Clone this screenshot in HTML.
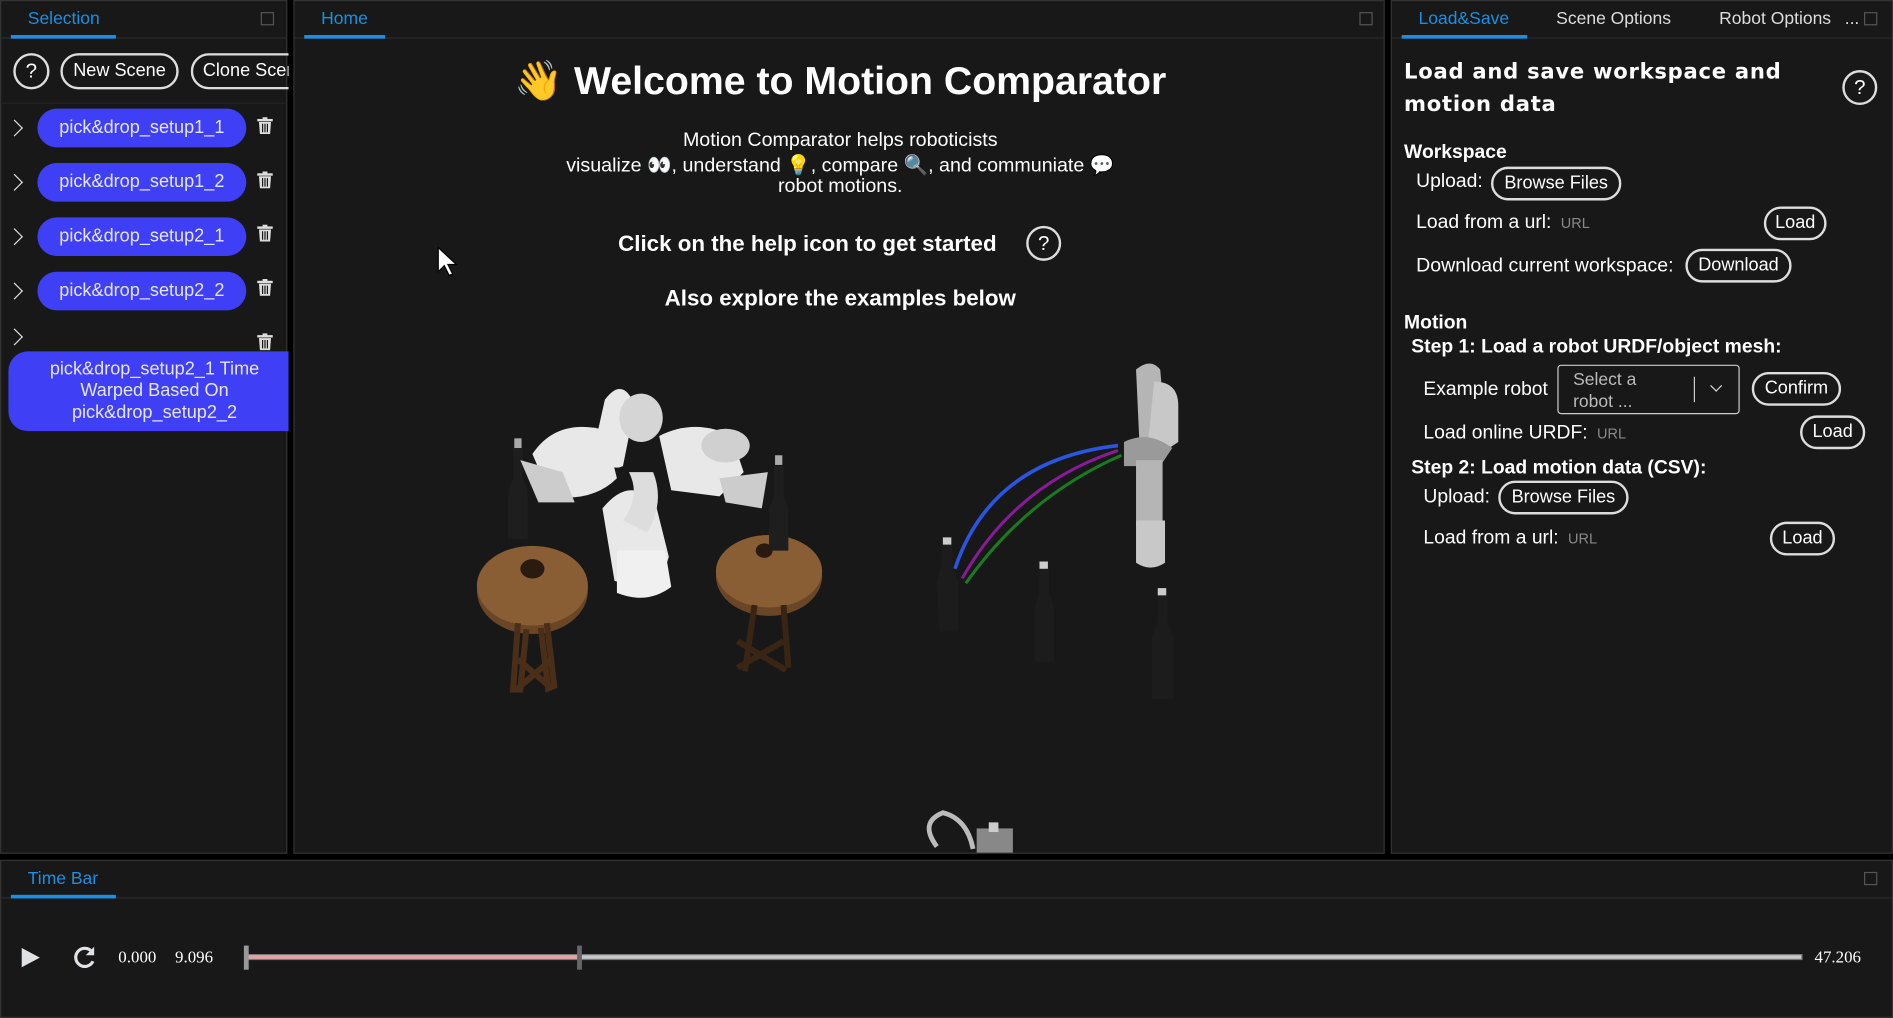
<!DOCTYPE html>
<html><head><meta charset="utf-8">
<style>
*{box-sizing:border-box;margin:0;padding:0}
html,body{width:1893px;height:1018px;overflow:hidden;background:#000}
#root{position:absolute;left:0;top:0;width:1568px;height:843px;transform:scale(1.20727,1.20760);transform-origin:0 0;background:#000;font-family:"Liberation Sans",Arial,sans-serif;color:#fff}
.panel{position:absolute;background:#181818;border:1px solid #333}
.tabbar{position:absolute;left:0;right:0;top:0;height:31px;border-bottom:1px solid #2c2c2c}
.tab{position:absolute;top:7px;font-size:14.5px;color:#ddd}
.tab.act{color:#1a8fe3}
.uline{position:absolute;top:28px;height:3px;background:#1a8fe3}
.max{position:absolute;top:9px;width:11px;height:11px;border:1.5px solid #555}
.pill{position:absolute;border:2px solid #ddd;border-radius:16px;font-size:15px;color:#fff;text-align:center;line-height:24px;height:28px}
.blue{position:absolute;background:#3f40f5;border-radius:16px;color:#e6e6ff;font-size:15px;text-align:center}
.chev{position:absolute;left:9px;width:10px;height:10px;border-right:1.6px solid #ddd;border-top:1.6px solid #ddd;transform:rotate(45deg)}
.trash{position:absolute;left:212px;width:13px;height:14px}
.t{position:absolute;white-space:nowrap}
.b{font-weight:bold}
.url{color:#888;font-size:12px}
</style></head><body><div id="root">

<!-- Selection panel -->
<div class="panel" style="left:0;top:0;width:238px;height:707px">
 <div class="tabbar"><span class="tab act" style="left:22px">Selection</span><div class="uline" style="left:8px;width:87px"></div><div class="max" style="left:215px"></div></div>
 <div class="pill" style="left:10px;top:43px;width:30px;height:30px;border-radius:50%;line-height:26px;font-size:17px">?</div>
 <div class="pill" style="left:49px;top:43px;width:98px;height:30px;line-height:26px">New Scene</div>
 <div style="position:absolute;left:157px;top:43px;width:81px;height:30px;overflow:hidden"><div class="pill" style="left:0;top:0;width:100px;height:30px;line-height:26px;text-align:left;padding-left:8px">Clone Scene</div></div>
 <div style="position:absolute;left:0;top:84px;width:236px;height:1px;background:#222"></div>

 <div class="chev" style="top:100px;left:6px"></div>
 <div class="blue" style="left:30px;top:89px;width:173px;height:32px;line-height:32px">pick&amp;drop_setup1_1</div>
 <div class="chev" style="top:145px;left:6px"></div>
 <div class="blue" style="left:30px;top:134px;width:173px;height:32px;line-height:32px">pick&amp;drop_setup1_2</div>
 <div class="chev" style="top:190px;left:6px"></div>
 <div class="blue" style="left:30px;top:179px;width:173px;height:32px;line-height:32px">pick&amp;drop_setup2_1</div>
 <div class="chev" style="top:235px;left:6px"></div>
 <div class="blue" style="left:30px;top:224px;width:173px;height:32px;line-height:32px">pick&amp;drop_setup2_2</div>
 <div class="chev" style="top:273px;left:6px"></div>
 <div class="blue" style="left:6px;top:290px;width:232px;height:66px;line-height:18px;padding-top:6px;border-radius:16px 0 0 16px;padding-left:10px">pick&amp;drop_setup2_1 Time<br>Warped Based On<br>pick&amp;drop_setup2_2</div>
 <svg class="trash" style="top:96px" viewBox="0 0 13 14"><rect x="0" y="1.5" width="13" height="2" fill="#ddd"/><rect x="4.5" y="0" width="4" height="2" fill="#ddd"/><path d="M1.5 4h10l-.8 10h-8.4z" fill="#ddd"/><path d="M4.5 5.5v7M6.5 5.5v7M8.5 5.5v7" stroke="#181818" stroke-width="1"/></svg>
 <svg class="trash" style="top:141px" viewBox="0 0 13 14"><rect x="0" y="1.5" width="13" height="2" fill="#ddd"/><rect x="4.5" y="0" width="4" height="2" fill="#ddd"/><path d="M1.5 4h10l-.8 10h-8.4z" fill="#ddd"/><path d="M4.5 5.5v7M6.5 5.5v7M8.5 5.5v7" stroke="#181818" stroke-width="1"/></svg>
 <svg class="trash" style="top:185px" viewBox="0 0 13 14"><rect x="0" y="1.5" width="13" height="2" fill="#ddd"/><rect x="4.5" y="0" width="4" height="2" fill="#ddd"/><path d="M1.5 4h10l-.8 10h-8.4z" fill="#ddd"/><path d="M4.5 5.5v7M6.5 5.5v7M8.5 5.5v7" stroke="#181818" stroke-width="1"/></svg>
 <svg class="trash" style="top:230px" viewBox="0 0 13 14"><rect x="0" y="1.5" width="13" height="2" fill="#ddd"/><rect x="4.5" y="0" width="4" height="2" fill="#ddd"/><path d="M1.5 4h10l-.8 10h-8.4z" fill="#ddd"/><path d="M4.5 5.5v7M6.5 5.5v7M8.5 5.5v7" stroke="#181818" stroke-width="1"/></svg>
 <svg class="trash" style="top:275px" viewBox="0 0 13 14"><rect x="0" y="1.5" width="13" height="2" fill="#ddd"/><rect x="4.5" y="0" width="4" height="2" fill="#ddd"/><path d="M1.5 4h10l-.8 10h-8.4z" fill="#ddd"/><path d="M4.5 5.5v7M6.5 5.5v7M8.5 5.5v7" stroke="#181818" stroke-width="1"/></svg>
</div>

<!-- Home panel -->
<div class="panel" style="left:243px;top:0;width:904px;height:707px;overflow:hidden">
 <div class="tabbar"><span class="tab act" style="left:22px">Home</span><div class="uline" style="left:8px;width:67px"></div><div class="max" style="left:882px"></div></div>
 <svg style="position:absolute;left:0;top:0" width="904" height="707" viewBox="243 0 904 707">
  <ellipse cx="440" cy="488" rx="46" ry="36" fill="#6b4626"/>
  <ellipse cx="440" cy="484" rx="46" ry="33" fill="#8a5e34"/>
  <ellipse cx="440" cy="470" rx="10" ry="8" fill="#2a1a10"/>
  <path d="M428 515l-4 55 6 0 5-50M452 515l6 52-5 2-6-50M428 545l28 24M456 545l-28 24" stroke="#4a2e18" stroke-width="5" fill="none"/>
  <ellipse cx="636" cy="476" rx="44" ry="33" fill="#6b4626"/>
  <ellipse cx="636" cy="472" rx="44" ry="30" fill="#8a5e34"/>
  <ellipse cx="632" cy="455" rx="7" ry="6" fill="#2a1a10"/>
  <path d="M624 500l-8 55M648 500l4 52M610 530l40 24M648 530l-38 22" stroke="#3a2414" stroke-width="5" fill="none"/>
  <path d="M424 370h8v25l4 10v40h-16v-40l4-10z" fill="#1e1e1e"/>
  <rect x="425" y="362" width="6" height="8" fill="#aaa"/>
  <path d="M640 385h8v25l4 10v35h-16v-35l4-10z" fill="#1e1e1e"/>
  <rect x="641" y="376" width="6" height="8" fill="#aaa"/>
  <g fill="#e8e8e8">
   <path d="M500 330 q15 -20 25 5 l-10 50 q-10 5 -25 -10z"/>
   <ellipse cx="530" cy="345" rx="18" ry="20" fill="#d5d5d5"/>
   <path d="M440 375 q20 -30 60 -20 l10 40 q-20 20 -55 15z"/>
   <path d="M430 380 l35 10 l10 25 l-30 0z" fill="#ccc"/>
   <path d="M498 420 q25 -30 45 0 l10 40 q-5 20 -25 25 l-20 -5z"/>
   <path d="M510 455 h40 l5 30 q-20 15 -45 5z" fill="#f0f0f0"/>
   <path d="M545 360 q30 -15 60 0 l10 30 -20 20 -40 -5z"/>
   <ellipse cx="600" cy="368" rx="20" ry="14" fill="#d0d0d0"/>
   <path d="M595 395 l40 -5 -5 30 -30 -5z" fill="#ccc"/>
   <path d="M520 390 q10 20 -5 40 l20 10 q15 -25 5 -50z" fill="#ddd"/>
  </g>
  <g fill="#b5b5b5">
   <path d="M940 305 q12 -10 20 0 l5 55 -10 15 -12 -5z"/>
   <path d="M955 315 q20 0 20 20 l0 30 -15 10 -10 -10z" fill="#c8c8c8"/>
   <path d="M930 365 q20 -10 40 5 l-10 15 -30 0z" fill="#9a9a9a"/>
   <path d="M940 380 h22 v55 h-22z"/>
   <path d="M940 430 h24 v35 q-12 8 -24 0z" fill="#c8c8c8"/>
  </g>
  <path d="M790 470 Q820 380 925 368" stroke="#2a55e0" stroke-width="3" fill="none"/>
  <path d="M796 478 Q840 400 925 372" stroke="#8a1a9a" stroke-width="2.5" fill="none"/>
  <path d="M799 482 Q850 410 928 376" stroke="#1a7a20" stroke-width="2.5" fill="none"/>
  <g fill="#1c1c1c">
   <path d="M780 450h8v20l5 12v40h-16l-2-40 3-12z"/><rect x="780" y="444" width="7" height="6" fill="#ccc"/>
   <path d="M860 470h8v20l4 12v45h-16v-45l4-12z"/><rect x="860" y="464" width="7" height="6" fill="#ccc"/>
   <path d="M958 492h8v22l5 12v52h-18v-52l5-12z"/><rect x="958" y="486" width="7" height="6" fill="#ccc"/>
  </g>
  <path d="M775 700 q-15 -20 5 -28 q20 5 25 30" stroke="#bbb" stroke-width="4" fill="none"/>
  <rect x="808" y="685" width="30" height="22" fill="#888"/><rect x="818" y="680" width="8" height="8" fill="#ccc"/>
  <path d="M362 204 v20 l5 -5 4 8 3 -1 -4 -8 7 0z" fill="#fff" stroke="#000" stroke-width="1"/>
 </svg>
 <div class="t b" style="left:0;width:904px;text-align:center;top:47px;font-size:32.5px">👋 Welcome to Motion Comparator</div>
 <div class="t" style="left:0;width:904px;text-align:center;top:105px;font-size:16.3px;line-height:21px;white-space:normal">Motion Comparator helps roboticists<br>visualize 👀, understand 💡, compare 🔍, and communiate 💬<br><span style="position:relative;top:-4px">robot motions.</span></div>
 <div class="t b" style="left:268px;top:190px;font-size:18.5px">Click on the help icon to get started</div>
 <div class="pill" style="left:606px;top:186px;width:29px;height:29px;border-radius:50%;line-height:25px;font-size:17px">?</div>
 <div class="t b" style="left:0;width:904px;text-align:center;top:235px;font-size:18.5px">Also explore the examples below</div>
</div>

<!-- Right panel -->
<div class="panel" style="left:1152px;top:0;width:416px;height:707px">
 <div class="tabbar"><span class="tab act" style="left:22px">Load&amp;Save</span><span class="tab" style="left:136px">Scene Options</span><span class="tab" style="left:271px">Robot Options</span><span class="tab" style="left:375px">...</span><div class="uline" style="left:8px;width:104px"></div><div class="max" style="left:391px"></div></div>
 <div class="t b" style="left:10px;top:46px;line-height:27px;letter-spacing:.6px;font-family:'DejaVu Sans',sans-serif;font-size:17.5px">Load and save workspace and<br>motion data</div>
 <div class="pill" style="left:373px;top:57px;width:29px;height:29px;border-radius:50%;line-height:25px;font-size:17px">?</div>
 <div class="t b" style="left:10px;top:117px;font-size:16px">Workspace</div>
 <div class="t" style="left:20px;top:141px;font-size:16px">Upload:</div>
 <div class="pill" style="left:82px;top:137px;width:108px">Browse Files</div>
 <div class="t" style="left:20px;top:175px;font-size:16px">Load from a url: <span class="url">&nbsp;URL</span></div>
 <div class="pill" style="left:308px;top:170px;width:52px">Load</div>
 <div class="t" style="left:20px;top:210px;font-size:16.2px">Download current workspace:</div>
 <div class="pill" style="left:243px;top:205px;width:88px">Download</div>
 <div class="t b" style="left:10px;top:258px;font-size:16px">Motion</div>
 <div class="t b" style="left:16px;top:278px;font-size:16px">Step 1: Load a robot URDF/object mesh:</div>
 <div class="t" style="left:26px;top:313px;font-size:16px">Example robot</div>
 <div style="position:absolute;left:137px;top:301px;width:151px;height:41px;border:1px solid #ccc;border-radius:3px;font-size:14.5px;color:#bbb;line-height:18px;padding:3px 0 0 12px">Select a<br>robot ...<div style="position:absolute;left:112px;top:9px;width:1px;height:21px;background:#ccc"></div><div style="position:absolute;left:127px;top:13px;width:7px;height:7px;border-right:1.6px solid #ddd;border-bottom:1.6px solid #ddd;transform:rotate(45deg)"></div></div>
 <div class="pill" style="left:298px;top:307px;width:74px">Confirm</div>
 <div class="t" style="left:26px;top:349px;font-size:16px">Load online URDF: <span class="url">&nbsp;URL</span></div>
 <div class="pill" style="left:338px;top:343px;width:54px">Load</div>
 <div class="t b" style="left:16px;top:378px;font-size:16px">Step 2: Load motion data (CSV):</div>
 <div class="t" style="left:26px;top:402px;font-size:16px">Upload:</div>
 <div class="pill" style="left:88px;top:397px;width:108px">Browse Files</div>
 <div class="t" style="left:26px;top:436px;font-size:16px">Load from a url: <span class="url">&nbsp;URL</span></div>
 <div class="pill" style="left:313px;top:431px;width:54px">Load</div>
</div>

<!-- Time bar -->
<div class="panel" style="left:0;top:712px;width:1568px;height:131px">
 <div class="tabbar"><span class="tab act" style="left:22px">Time Bar</span><div class="uline" style="left:8px;width:87px"></div><div class="max" style="left:1543px"></div></div>
 <svg style="position:absolute;left:15px;top:70px" width="20" height="20" viewBox="0 0 20 20"><path d="M2 2 L17 10 L2 18z" fill="#dfe3e6"/></svg>
 <svg style="position:absolute;left:58px;top:69px" width="22" height="22" viewBox="0 0 22 22"><path d="M17 6 A7.5 7.5 0 1 0 18 14" stroke="#dfe3e6" stroke-width="2.6" fill="none"/><path d="M19 2 v7 h-7z" fill="#dfe3e6"/></svg>
 <div class="t" style="left:97px;top:73px;font-size:14px;font-family:'Liberation Serif',serif">0.000</div>
 <div class="t" style="left:144px;top:73px;font-size:14px;font-family:'Liberation Serif',serif">9.096</div>
 <div style="position:absolute;left:203px;top:77px;width:1289px;height:5px;background:#c8c8c8;border:1px solid #777"></div>
 <div style="position:absolute;left:204px;top:78px;width:275px;height:3px;background:#e4a3a3"></div>
 <div style="position:absolute;left:201px;top:70px;width:4px;height:20px;background:#999"></div>
 <div style="position:absolute;left:477px;top:70px;width:4px;height:20px;background:#666"></div>
 <div class="t" style="left:1502px;top:73px;font-size:14px;font-family:'Liberation Serif',serif">47.206</div>
</div>

</div></body></html>
